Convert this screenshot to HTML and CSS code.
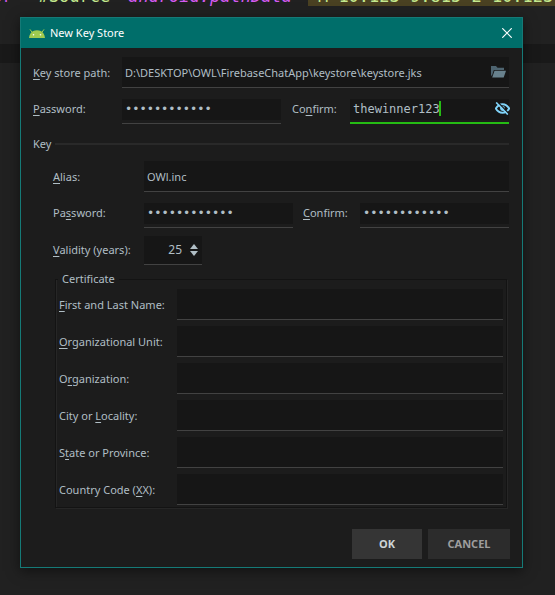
FILE: index.html
```html
<!DOCTYPE html>
<html lang="en">
<head>
<meta charset="utf-8">
<title>New Key Store</title>
<link rel="stylesheet" href="styles.css">
</head>
<body>
<div class="editor">
  <div class="code"><span class="attr">or</span><span class="str">#Source</span><span class="attr name">android:pathData</span><span class="match">M 10.123 9.815 2 10.123</span></div>
  <div class="current-line"></div>
</div>

<main class="dialog">
  <header class="titlebar">
    <svg class="android" viewBox="0 0 16 9" aria-hidden="true">
      <path d="M0 9C.3 5.400 2.200 3.100 4.200 2.100 6.300.9 9.700.9 11.800 2.100 13.800 3.100 15.700 5.400 16 9z" fill="#a0cc50"/>
      <path d="M1 .4 3 3.200M15 .4 13 3.200" stroke="#a0cc50" stroke-width="1"/>
      <circle cx="4.500" cy="5.800" r=".8" fill="#fff"/><circle cx="11.500" cy="5.800" r=".8" fill="#fff"/>
    </svg>
    <h1>New Key Store</h1>
    <button class="close" type="button" aria-label="Close">
      <svg viewBox="0 0 10 10" aria-hidden="true"><path d="M.3.3 9.700 9.700M9.700.3.3 9.700" stroke="#fff" stroke-width="1.200"/></svg>
    </button>
  </header>

  <form class="form">
    <div class="row tall store">
      <label for="path"><u>K</u>ey store path:</label>
      <div class="field with-icon">
        <input id="path" type="text" value="D:\DESKTOP\OWL\FirebaseChatApp\keystore\keystore.jks">
        <button class="icon folder" type="button" aria-label="Browse">
          <svg viewBox="0 0 15 12" aria-hidden="true"><path d="M0 0h5l1.500 1.700H13V4H2.800L1.200 9 0 10z" fill="#4e6470"/><path d="M3.500 4.700H15L12.700 11.500H1.200z" fill="#68818d"/></svg>
        </button>
      </div>
    </div>

    <div class="row short store">
      <label for="store-pass"><u>P</u>assword:</label>
      <div class="secret"><input id="store-pass" type="password" value="thewinner123"></div>
      <label class="second" for="store-confirm">Co<u>n</u>firm:</label>
      <div class="secret active">
        <input id="store-confirm" type="text" value="thewinner123">
        <span class="caret"></span>
        <button class="icon eye" type="button" aria-label="Hide password">
          <svg viewBox="0 0 15 13" aria-hidden="true"><path d="M.8 6.500C2.500 3.500 4.800 2.200 7.500 2.200S12.500 3.500 14.200 6.500C12.500 9.500 10.200 10.800 7.500 10.800S2.500 9.500.8 6.500z" fill="none" stroke="#81d4fa" stroke-width="2"/><circle cx="7.500" cy="6.500" r="2.400" fill="#81d4fa"/><path d="M2.700 0 14.200 12" stroke="#161616" stroke-width="1.300"/><path d="M1.200.5 12.800 12.500" stroke="#81d4fa" stroke-width="1.600"/></svg>
        </button>
      </div>
    </div>

    <h2 class="section">Key</h2>

    <div class="key">
      <div class="row tall">
        <label for="alias"><u>A</u>lias:</label>
        <div class="field"><input id="alias" type="text" value="OWl.inc"></div>
      </div>

      <div class="row short">
        <label for="key-pass">Pa<u>s</u>sword:</label>
        <div class="secret"><input id="key-pass" type="password" value="thewinner123"></div>
        <label class="second" for="key-confirm"><u>C</u>onfirm:</label>
        <div class="secret"><input id="key-confirm" type="password" value="thewinner123"></div>
      </div>

      <div class="row years">
        <label for="validity"><u>V</u>alidity (years):</label>
        <div class="spinner">
          <input id="validity" type="number" value="25">
          <div class="steps">
            <button type="button" aria-label="Increase"><svg viewBox="0 0 8 5" aria-hidden="true"><path d="M4 0 8 5H0z"/></svg></button>
            <button type="button" aria-label="Decrease"><svg viewBox="0 0 8 5" aria-hidden="true"><path d="M0 0H8L4 5z"/></svg></button>
          </div>
        </div>
      </div>

      <fieldset class="certificate">
        <legend>Certificate</legend>
        <div class="row tall"><label for="name"><u>F</u>irst and Last Name:</label><div class="field"><input id="name" type="text"></div></div>
        <div class="row tall"><label for="unit"><u>O</u>rganizational Unit:</label><div class="field"><input id="unit" type="text"></div></div>
        <div class="row tall"><label for="org">O<u>r</u>ganization:</label><div class="field"><input id="org" type="text"></div></div>
        <div class="row tall"><label for="city">City or <u>L</u>ocality:</label><div class="field"><input id="city" type="text"></div></div>
        <div class="row tall"><label for="state">S<u>t</u>ate or Province:</label><div class="field"><input id="state" type="text"></div></div>
        <div class="row tall"><label for="country">Country Code (<u>X</u>X):</label><div class="field"><input id="country" type="text"></div></div>
      </fieldset>
    </div>

    <footer class="actions">
      <button class="btn primary" type="submit">OK</button>
      <button class="btn" type="button">CANCEL</button>
    </footer>
  </form>
</main>
</body>
</html>
```
FILE: styles.css
```css
* { box-sizing: border-box; }

body {
  margin: 0;
  min-height: 100vh;
  background: #212121;
  color: #b0bec5;
  font: 11px/16px "Noto Sans", sans-serif;
  display: flow-root;
}

/* Code editor behind the dialog */
.editor {
  position: absolute;
  inset: 0;
  overflow: hidden;
}
.code {
  display: flex;
  margin: -14px 0 0 -8px;
  font: 17px/20px "DejaVu Sans Mono", monospace;
  white-space: pre;
}
.attr { color: #d45af0; }
.name { font-style: italic; }
.str { margin: 0 18px 0 26px; color: #c3e88d; }
.match { margin-left: 16px; padding: 0 10px; background: #4a4122; color: #c3e88d; }
.current-line { margin-top: 38px; height: 19px; background: #191919; }

/* Dialog */
.dialog {
  position: relative;
  margin: 17px 32px 27px 20px;
  border: 1px solid #157a77;
  background: #1c1c1c;
  box-shadow: 0 3px 12px rgba(0, 0, 0, 0.5);
}
.titlebar {
  display: flex;
  align-items: center;
  height: 30px;
  padding: 0 10px 0 8px;
  background: #006e6a;
  color: #fff;
}
.android { width: 16px; height: 9px; margin-right: 5px; }
h1 { flex: 1; margin: 0; font-size: 11px; font-weight: 400; }
button {
  border: 0;
  padding: 0;
  background: none;
  color: inherit;
  font: inherit;
}
.close svg { display: block; width: 10px; height: 10px; }

.form { padding: 9px 13px 8px 12px; }
.row { display: flex; }
.row label { flex: none; white-space: nowrap; }
.tall { align-items: center; }
.short { margin-top: 11px; line-height: 20px; }
.store > label:first-child { width: 89px; }
u { text-underline-offset: 2px; }

input {
  display: block;
  width: 100%;
  min-width: 0;
  border: 0;
  padding: 0 3px;
  outline: 0;
  background: #161616;
  color: inherit;
  font: inherit;
}
.field { flex: 1; border-bottom: 1px solid #424242; }
.field input { height: 30px; }
.with-icon { position: relative; }
.icon { position: absolute; }
.icon svg { display: block; width: 15px; }
.folder { right: 3px; top: 9px; }
.eye { right: -1px; top: 3px; }

.secret {
  position: relative;
  flex: 1;
  padding-bottom: 3px;
  border-bottom: 1px solid #424242;
  font: 12px/16px "DejaVu Sans Mono", monospace;
}
.secret input { height: 21px; padding-bottom: 2px; }
.active { padding-bottom: 2px; border-bottom: 2px solid #25bc14; }
.caret {
  position: absolute;
  left: calc(2px + 12ch);
  top: 2px;
  width: 2px;
  height: 15px;
  background: #25bc14;
}
.second { margin-left: 11px; width: 58px; }

.section {
  display: flex;
  align-items: center;
  gap: 4px;
  margin: 12px 0 9px;
  font-size: 11px;
  font-weight: 400;
}
.section::after { content: ""; flex: 1; height: 2px; background: #292929; }

.form .key { padding-left: 20px; }
.key > .row > label:first-child { width: 91px; }
.key .second { width: 57px; margin-left: 10px; }

.years { margin-top: 8px; line-height: 28px; }
.spinner {
  display: flex;
  width: 58px;
  height: 29px;
  padding-right: 4px;
  border-bottom: 1px solid #424242;
  background: #161616;
}
.spinner input { flex: 1; font-size: 12px; text-align: right; appearance: textfield; }
.spinner input::-webkit-inner-spin-button { appearance: none; }
.steps {
  display: flex;
  flex-direction: column;
  justify-content: center;
  gap: 2px;
  margin-left: 5px;
}
.steps svg { display: block; width: 8px; height: 5px; fill: #b0bec5; }

.certificate {
  min-width: 0;
  margin: 6px 2px 0;
  padding: 2px 3px;
  border: 1px solid #131313;
  box-shadow: 1px 1px 0 #262626, inset 1px 0 0 #262626;
}
.certificate legend { margin-left: -1px; padding: 0 4px; }
.certificate label { width: 118px; }
.certificate .row + .row { margin-top: 6px; }

.actions {
  display: flex;
  justify-content: flex-end;
  gap: 6px;
  margin: 21px -1px 0 0;
}
.btn {
  width: 82px;
  height: 30px;
  background: #2c2c2c;
  color: #9e9e9e;
  font-weight: 700;
}
.primary { width: 70px; background: #353535; color: #ccd3d6; }
```
